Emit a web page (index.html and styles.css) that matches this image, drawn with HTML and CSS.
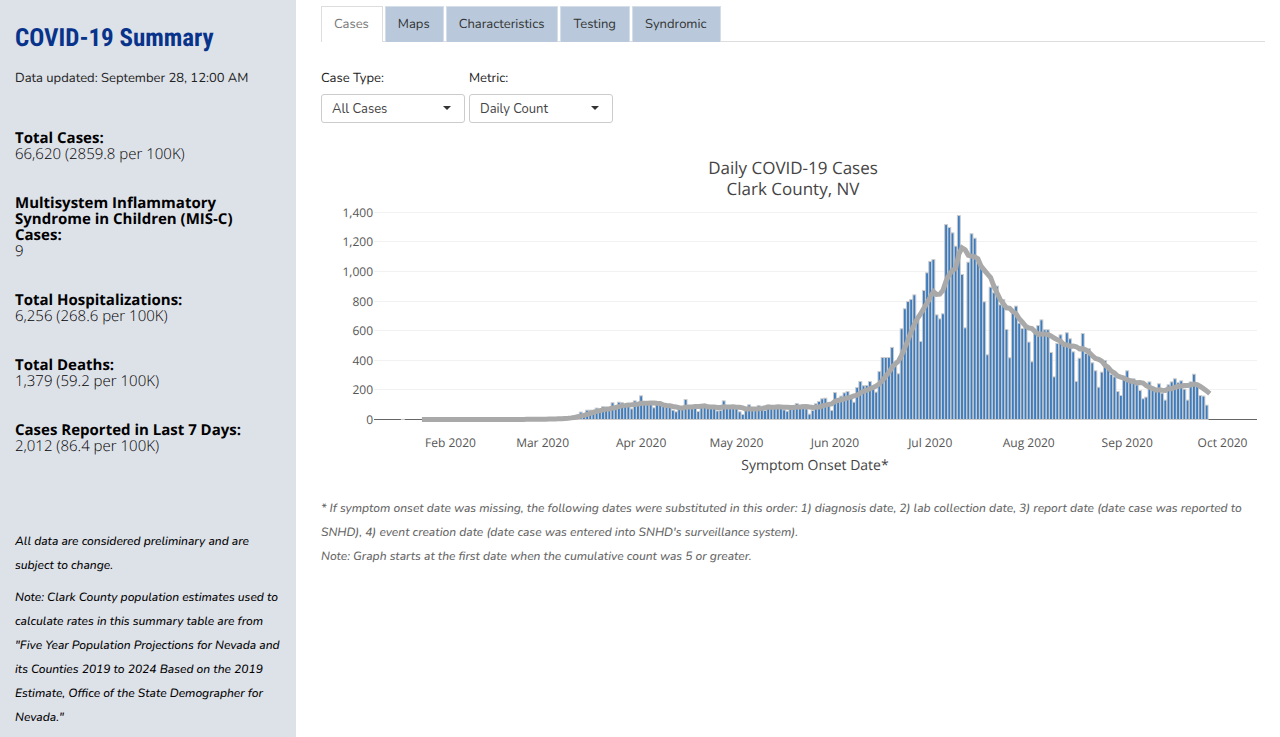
FILE: index.html
```html
<!DOCTYPE html>
<html lang="en">
<head>
  <meta charset="UTF-8"/>
  <meta name="viewport" content="width=device-width, initial-scale=1.0"/>
  <title>COVID-19 Summary</title>
  <link rel="stylesheet" href="styles.css">
</head>
<body>

<aside class="sidebar">
  <h1>COVID-19 Summary</h1>
  <p class="updated">Data updated: September 28, 12:00 AM</p>

  <dl class="stats">
    <div class="stat">
      <dt>Total Cases:</dt>
      <dd>66,620 (2859.8 per 100K)</dd>
    </div>
    <div class="stat">
      <dt>Multisystem Inflammatory Syndrome in Children (MIS-C) Cases:</dt>
      <dd>9</dd>
    </div>
    <div class="stat">
      <dt>Total Hospitalizations:</dt>
      <dd>6,256 (268.6 per 100K)</dd>
    </div>
    <div class="stat">
      <dt>Total Deaths:</dt>
      <dd>1,379 (59.2 per 100K)</dd>
    </div>
    <div class="stat">
      <dt>Cases Reported in Last 7 Days:</dt>
      <dd>2,012 (86.4 per 100K)</dd>
    </div>
  </dl>

  <div class="notes">
    <p>All data are considered preliminary and are subject to change.</p>
    <p>Note: Clark County population estimates used to calculate rates in this summary table are from "Five Year Population Projections for Nevada and its Counties 2019 to 2024 Based on the 2019 Estimate, Office of the State Demographer for Nevada."</p>
  </div>
</aside>

<main>
  <nav class="tabs">
    <a class="active" href="#cases">Cases</a>
    <a href="#maps">Maps</a>
    <a href="#characteristics">Characteristics</a>
    <a href="#testing">Testing</a>
    <a href="#syndromic">Syndromic</a>
  </nav>

  <form class="filters">
    <div class="field">
      <label for="caseType">Case Type:</label>
      <div class="select-box">
        <select id="caseType">
          <option>All Cases</option>
          <option>Hospitalizations</option>
          <option>Deaths</option>
        </select>
      </div>
    </div>
    <div class="field">
      <label for="metric">Metric:</label>
      <div class="select-box">
        <select id="metric">
          <option>Daily Count</option>
          <option>Cumulative Count</option>
        </select>
      </div>
    </div>
  </form>

  <svg class="chart" id="chart" viewBox="0 0 944 332" role="img" aria-label="Daily COVID-19 Cases, Clark County, NV">
    <text class="chart-title" x="472" y="24">Daily COVID-19 Cases</text>
    <text class="chart-title" x="472" y="45">Clark County, NV</text>
    <g id="grid"></g>
    <g id="bars"></g>
    <polyline id="average" class="average"/>
    <g id="months"></g>
    <text class="axis-title" x="494" y="320">Symptom Onset Date*</text>
  </svg>

  <div class="footnote">
    <p>* If symptom onset date was missing, the following dates were substituted in this order: 1) diagnosis date, 2) lab collection date, 3) report date (date case was reported to SNHD), 4) event creation date (date case was entered into SNHD's surveillance system).</p>
    <p>Note: Graph starts at the first date when the cumulative count was 5 or greater.</p>
  </div>
</main>

<script src="chart.js"></script>
</body>
</html>
```
FILE: styles.css
```css
* {
  box-sizing: border-box;
}

body {
  display: flex;
  min-height: 100vh;
  margin: 0;
  background: #fff;
  color: #222;
  font-family: Nunito, "Open Sans", sans-serif;
  font-size: 13px;
  text-rendering: geometricPrecision;
}

.sidebar {
  flex: 0 0 296px;
  background: #dde1e8;
  padding: 24px 14px 0 15px;
}

h1 {
  margin: 0;
  color: #08338a;
  font-family: "Roboto Condensed", Roboto, sans-serif;
  font-size: 25px;
  font-weight: 700;
  line-height: 30px;
}

.updated {
  margin: 14px 0 42px;
  line-height: 20px;
}

.stats {
  display: flex;
  flex-direction: column;
  gap: 33px;
  margin: 0;
  color: #000;
  font-family: "Open Sans", sans-serif;
  font-size: 15px;
  line-height: 16px;
}

.stat dt {
  font-weight: 700;
}

.stat dd {
  margin: 0;
  font-weight: 300;
}

.notes {
  margin-top: 76px;
  color: #000;
  font-size: 12px;
  font-style: italic;
  font-weight: 500;
  line-height: 24px;
}

.notes p {
  margin: 0 0 8px;
}

.notes p:last-child {
  margin-bottom: 0;
}

main {
  flex: 1;
  min-width: 0;
  padding: 6px 15px 0 25px;
}

.tabs {
  display: flex;
  gap: 2px;
  border-bottom: 1px solid #ddd;
}

.tabs a {
  margin-bottom: -1px;
  padding: 8px 13px 8px 12px;
  border: 1px solid #d5dde8;
  border-bottom: 0;
  background: #b9c9db;
  color: #333;
  line-height: 19px;
  text-decoration: none;
}

.tabs a.active {
  border-color: #ddd;
  background: #fff;
  color: #777;
}

.filters {
  display: flex;
  gap: 4px;
  margin: 26px 0 27px;
}

.field {
  width: 144px;
}

.field label {
  display: block;
  margin-bottom: 6px;
  line-height: 20px;
}

.select-box {
  position: relative;
}

.select-box::after {
  content: "";
  position: absolute;
  top: 12px;
  right: 14px;
  border: 4px solid transparent;
  border-top-color: #333;
  border-bottom: 0;
  pointer-events: none;
}

.field select {
  width: 100%;
  height: 29px;
  padding: 0 10px;
  appearance: none;
  border: 1px solid #ccc;
  border-radius: 3px;
  background: #fff;
  color: #444;
  font: inherit;
}

.chart {
  display: block;
  width: 100%;
  height: auto;
  fill: #444;
  font-family: "Open Sans", sans-serif;
  font-size: 12px;
}

.chart-title,
.axis-title,
.month {
  text-anchor: middle;
}

.chart-title {
  font-size: 17px;
}

.axis-title {
  font-size: 14px;
}

.month,
.tick {
  fill: #555;
}

.tick {
  text-anchor: end;
}

.grid-line {
  stroke: #f2f2f2;
}

.zero-line {
  stroke: #666;
}

.bar {
  fill: #3b7bbf;
  stroke: #ccc;
}

.average {
  fill: none;
  stroke: #a9a9a9;
  stroke-width: 5;
}

.footnote {
  margin-top: 15px;
  color: #666;
  font-size: 12px;
  font-style: italic;
  font-weight: 500;
  line-height: 24px;
}

.footnote p {
  margin: 0;
}
```
FILE: chart.js
```javascript
// Daily case counts, January 23 to September 27, 2020
const counts = [
  0, 0, 0, 0, 0, 0, 0, 0, 0,
  // February
  0, 0, 0, 0, 1, 0, 0, 0, 0, 1, 0, 0, 0, 1, 0, 0, 1, 0, 1, 1, 0, 1, 1, 1, 2, 1, 2, 2, 3,
  // March
  3, 3, 4, 5, 6, 8, 10, 12, 15, 20, 26, 32, 50, 38, 63, 63, 63, 77, 68, 86, 77, 63, 113, 86, 117, 113, 99, 95, 72, 126, 104,
  // April
  160, 108, 104, 101, 79, 108, 99, 90, 81, 95, 63, 52, 79, 81, 135, 90, 90, 86, 54, 95, 95, 90,
  77, 95, 58, 61, 126, 86, 86, 86,
  // May
  81, 52, 34, 68, 99, 81, 77, 95, 72, 61, 99, 90, 90, 90, 86, 65, 56, 86, 95, 108, 95, 101, 72, 36, 61,
  106, 122, 140, 144, 106, 61,
  // June
  182, 144, 158, 180, 189, 146, 117, 216, 257, 228, 230, 257, 212, 185, 324, 419, 419, 419, 487, 383, 309,
  613, 748, 797, 811, 842, 669, 527, 872, 991,
  // July
  1068, 1081, 707, 680, 714, 1317, 1297, 1261, 1171, 1378, 980, 619, 1063, 1255, 1225, 1086, 1025, 795, 437,
  894, 856, 901, 775, 811, 608, 417, 737, 766, 651, 615, 622,
  // August
  523, 390, 590, 635, 673, 606, 606, 453, 288, 514, 572, 511, 586, 545, 457, 257, 414, 581, 446, 478, 383,
  329, 218, 320, 399, 338, 304, 288, 189, 162, 275,
  // September
  329, 275, 275, 234, 196, 140, 151, 254, 218, 203, 241, 178, 131, 234, 254, 275, 248, 261, 205, 131, 254,
  306, 243, 162, 158, 97, 0
];

const months = [
  ["Feb 2020", 0], ["Mar 2020", 29], ["Apr 2020", 60], ["May 2020", 90], ["Jun 2020", 121],
  ["Jul 2020", 151], ["Aug 2020", 182], ["Sep 2020", 213], ["Oct 2020", 243]
];

const firstDay = -9; // relative to February 1
const dayWidth = 3.177;
const baseY = 269.5;
const plotLeft = 53;
const plotRight = 936;

const x = day => 129.5 + day * dayWidth;
const y = value => baseY - value * 0.148;

function add(parent, name, attrs, text) {
  const el = document.createElementNS("http://www.w3.org/2000/svg", name);
  Object.keys(attrs).forEach(key => el.setAttribute(key, attrs[key]));
  if (text) el.textContent = text;
  document.getElementById(parent).appendChild(el);
}

for (let v = 0; v <= 1400; v += 200) {
  const top = Math.floor(y(v)) + 0.5;
  add("grid", "line", { class: v ? "grid-line" : "zero-line", x1: plotLeft, x2: plotRight, y1: top, y2: top });
  add("grid", "text", { class: "tick", x: plotLeft - 1, y: top + 4 }, v.toLocaleString("en-US"));
}

months.forEach(([label, day]) => {
  add("months", "text", { class: "month", x: x(day), y: 297 }, label);
});

function drawBar(day, value) {
  const width = dayWidth * 0.9;
  add("bars", "rect", { class: "bar", x: x(day) - width / 2, y: y(value), width: width, height: baseY - y(value) });
}

drawBar(-15, 1);
counts.forEach((value, i) => {
  if (value > 0) drawBar(firstDay + i, value);
});

// 7-day moving average
const points = counts.map((value, i) => {
  const week = counts.slice(Math.max(0, i - 6), i + 1);
  const mean = week.reduce((sum, n) => sum + n, 0) / 7;
  return x(firstDay + i) + "," + y(mean);
});
document.getElementById("average").setAttribute("points", points.join(" "));
```
